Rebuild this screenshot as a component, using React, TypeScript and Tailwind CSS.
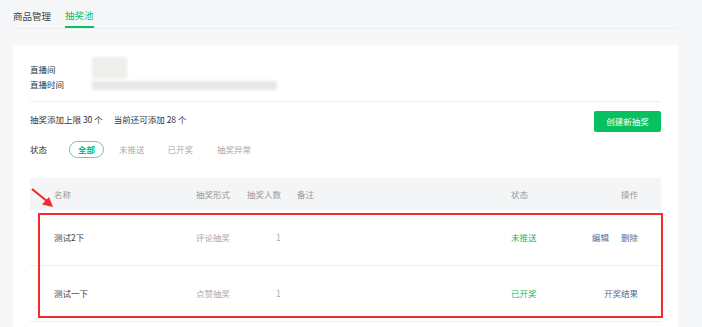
import React from "react";

const font = { fontFamily: '"Noto Sans CJK SC", "Noto Sans", sans-serif' };

export default function App() {
  const rows = [
    { name: "测试2下", type: "评论抽奖", n: "1", status: "未推送", actions: ["编辑", "删除"] },
    { name: "测试一下", type: "点赞抽奖", n: "1", status: "已开奖", actions: ["开奖结果"] },
  ];
  return (
    <div className="relative w-[702px] h-[327px] overflow-hidden bg-[#f6f7f9]" style={font}>
      {/* tabs */}
      <div className="ml-[13px] w-[665px] h-[29px] flex items-end gap-[14px] border-b border-[#eceef1]">
        <div className="h-[28px] flex items-center text-[9.5px] text-[#444] leading-none pt-[5px]">商品管理</div>
        <div className="h-[28px] flex items-center text-[9.5px] text-[#07c160] leading-none border-b-2 border-[#07c160] pt-[6px]">抽奖池</div>
      </div>

      {/* card */}
      <div className="mt-[16px] ml-[13px] w-[665px] h-[300px] bg-white px-[17px]">
        {/* live info */}
        <div className="relative h-[57px] border-b border-[#eeeeee]">
          <div className="absolute left-[62px] top-[12px] w-[35px] h-[22px] bg-[#efeeed] blur-[1.5px] rounded-[2px]" />
          <div className="absolute left-[62px] top-[36px] w-[185px] h-[9px] bg-[#e8e7e5] blur-[1.5px] rounded-[2px]" />
          <div className="absolute left-0 top-[17px] text-[8.5px] leading-[15px] text-[#333]">
            <div>直播间</div>
            <div>直播时间</div>
          </div>
        </div>

        {/* limit + button */}
        <div className="flex items-center justify-between h-[33px] pt-[2px]">
          <div className="flex gap-[11px] text-[8.5px] text-[#333] leading-none">
            <span>抽奖添加上限 30 个</span>
            <span>当前还可添加 28 个</span>
          </div>
          <button className="w-[67px] h-[21px] bg-[#07c160] text-white text-[8.5px] leading-none rounded-[2px] mt-[4px]">
            创建新抽奖
          </button>
        </div>

        {/* status filter */}
        <div className="flex items-center h-[28px] text-[8.5px] leading-none">
          <span className="text-[#333] w-[39px]">状态</span>
          <span className="w-[35px] h-[17px] flex items-center justify-center rounded-full border border-[#5fd49c] text-[#07c160] font-bold">全部</span>
          <span className="ml-[15px] text-[#aaa]">未推送</span>
          <span className="ml-[23px] text-[#aaa]">已开奖</span>
          <span className="ml-[24px] text-[#aaa]">抽奖异常</span>
        </div>

        {/* table */}
        <div className="mt-[15px]">
          <div className="grid grid-cols-[142px_51px_50px_214px_1fr_auto] items-center h-[32px] bg-[#f3f5f6] pl-[24px] pr-[23px] text-[8.5px] leading-none text-[#999]">
            <span>名称</span>
            <span>抽奖形式</span>
            <span>抽奖人数</span>
            <span>备注</span>
            <span>状态</span>
            <span>操作</span>
          </div>
          {rows.map((r, i) => (
            <div
              key={i}
              className="grid grid-cols-[142px_51px_50px_214px_1fr_auto] items-center h-[56px] border-b border-[#f0f0f0] pl-[24px] pr-[23px] text-[8.5px] leading-none"
            >
              <span className="text-[#444]">{r.name}</span>
              <span className="text-[#aaa]">{r.type}</span>
              <span className="text-[#aaa] pl-[29px]">{r.n}</span>
              <span />
              <span className="text-[#07c160]">{r.status}</span>
              <span className="flex gap-[12px] text-[#576b95]">
                {r.actions.map((a) => (
                  <span key={a}>{a}</span>
                ))}
              </span>
            </div>
          ))}
        </div>
      </div>

      {/* annotation */}
      <div className="absolute left-[38px] top-[213px] w-[625px] h-[105px] border-2 border-[#f22b2b]" />
      <svg className="absolute left-[28px] top-[185px]" width="30" height="28" viewBox="0 0 30 28">
        <line x1="4" y1="4" x2="20" y2="17" stroke="#f22b2b" strokeWidth="2.2" />
        <polygon points="25,22 14,19.5 21,12" fill="#f22b2b" />
      </svg>
    </div>
  );
}
